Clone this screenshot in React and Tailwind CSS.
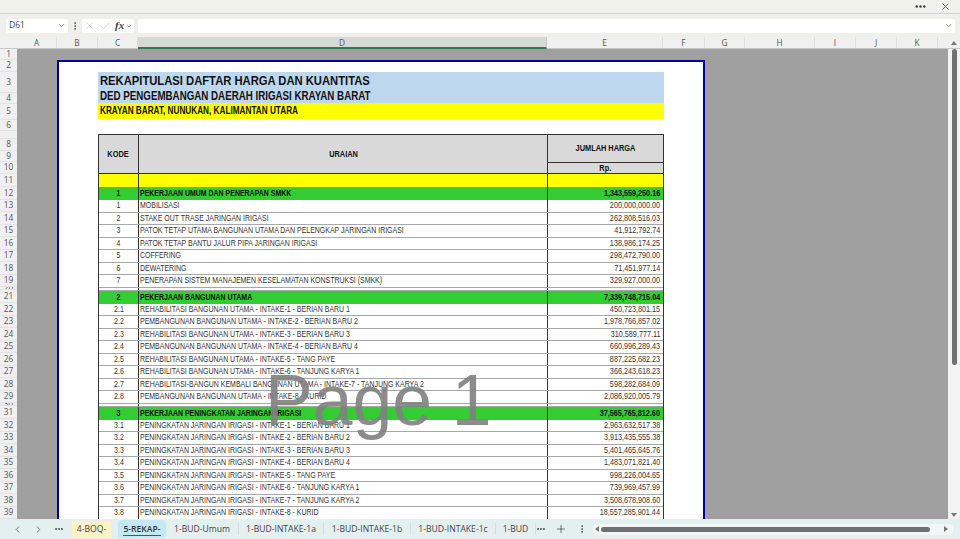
import { ChevronDown, ChevronLeft, ChevronRight, Check, X, Plus, Ellipsis, EllipsisVertical } from "lucide-react";

const columns = [
  { name: "A", width: "w-[40px]" },
  { name: "B", width: "w-[41px]" },
  { name: "C", width: "w-[40px]" },
  { name: "D", width: "w-[409px]", active: true },
  { name: "E", width: "w-[116px]" },
  { name: "F", width: "w-[42px]" },
  { name: "G", width: "w-[40px]" },
  { name: "H", width: "w-[70px]" },
  { name: "I", width: "w-[41px]" },
  { name: "J", width: "w-[41px]" },
  { name: "K", width: "w-[41px]" },
];

const rowHeaders = [
  ["1", "h-[11px]"], ["2", "h-[12px]"], ["3", "h-[21px]"], ["4", "h-[11px]"], ["5", "h-[16px]"],
  ["6", "h-[11px]"], ["", "h-[8px]"], ["8", "h-[11.5px]"], ["9", "h-[11.5px]"], ["10", "h-[12px]"],
  ["11", "h-[13px]"], ["12", "h-[12.5px]"], ["13", "h-[12.5px]"], ["14", "h-[12.5px]"], ["15", "h-[12.5px]"],
  ["16", "h-[12.5px]"], ["17", "h-[12.5px]"], ["18", "h-[12.5px]"], ["19", "h-[12.5px]"], ["20", "h-[3px]"],
  ["21", "h-[13px]"], ["22", "h-[12.5px]"], ["23", "h-[12.5px]"], ["24", "h-[12.5px]"], ["25", "h-[12.5px]"],
  ["26", "h-[12.5px]"], ["27", "h-[12.5px]"], ["28", "h-[12.5px]"], ["29", "h-[12.5px]"], ["30", "h-[3px]"],
  ["31", "h-[13px]"], ["32", "h-[12.5px]"], ["33", "h-[12.5px]"], ["34", "h-[12.5px]"], ["35", "h-[12.5px]"],
  ["36", "h-[12.5px]"], ["37", "h-[12.5px]"], ["38", "h-[12.5px]"], ["39", "h-[12.5px]"],
];

const sections = [
  {
    no: "1",
    title: "PEKERJAAN UMUM DAN PENERAPAN SMKK",
    total: "1,343,559,250.16",
    items: [
      ["1", "MOBILISASI", "200,000,000.00"],
      ["2", "STAKE OUT TRASE JARINGAN IRIGASI", "262,808,516.03"],
      ["3", "PATOK TETAP UTAMA BANGUNAN UTAMA DAN PELENGKAP JARINGAN IRIGASI", "41,912,792.74"],
      ["4", "PATOK TETAP BANTU JALUR PIPA JARINGAN IRIGASI", "138,986,174.25"],
      ["5", "COFFERING", "298,472,790.00"],
      ["6", "DEWATERING", "71,451,977.14"],
      ["7", "PENERAPAN SISTEM MANAJEMEN KESELAMATAN KONSTRUKSI (SMKK)", "329,927,000.00"],
    ],
  },
  {
    no: "2",
    title: "PEKERJAAN BANGUNAN UTAMA",
    total: "7,339,748,715.04",
    items: [
      ["2.1", "REHABILITASI BANGUNAN UTAMA - INTAKE-1 - BERIAN BARU 1", "450,723,801.15"],
      ["2.2", "PEMBANGUNAN BANGUNAN UTAMA - INTAKE-2 - BERIAN BARU 2", "1,978,766,857.02"],
      ["2.3", "REHABILITASI BANGUNAN UTAMA - INTAKE-3 - BERIAN BARU 3", "310,589,777.11"],
      ["2.4", "PEMBANGUNAN BANGUNAN UTAMA - INTAKE-4 - BERIAN BARU 4", "660,996,289.43"],
      ["2.5", "REHABILITASI BANGUNAN UTAMA - INTAKE-5 - TANG PAYE", "887,225,682.23"],
      ["2.6", "REHABILITASI BANGUNAN UTAMA - INTAKE-6 - TANJUNG KARYA 1", "366,243,618.23"],
      ["2.7", "REHABILITASI-BANGUN KEMBALI BANGUNAN UTAMA - INTAKE-7 - TANJUNG KARYA 2", "598,282,684.09"],
      ["2.8", "PEMBANGUNAN BANGUNAN UTAMA - INTAKE-8 - KURID", "2,086,920,005.79"],
    ],
  },
  {
    no: "3",
    title: "PEKERJAAN PENINGKATAN JARINGAN IRIGASI",
    total: "37,565,765,812.60",
    items: [
      ["3.1", "PENINGKATAN JARINGAN IRIGASI - INTAKE-1 - BERIAN BARU 1", "2,963,632,517.38"],
      ["3.2", "PENINGKATAN JARINGAN IRIGASI - INTAKE-2 - BERIAN BARU 2", "3,913,435,555.38"],
      ["3.3", "PENINGKATAN JARINGAN IRIGASI - INTAKE-3 - BERIAN BARU 3", "5,401,465,645.76"],
      ["3.4", "PENINGKATAN JARINGAN IRIGASI - INTAKE-4 - BERIAN BARU 4", "1,483,071,821.40"],
      ["3.5", "PENINGKATAN JARINGAN IRIGASI - INTAKE-5 - TANG PAYE", "998,226,004.65"],
      ["3.6", "PENINGKATAN JARINGAN IRIGASI - INTAKE-6 - TANJUNG KARYA 1", "739,969,457.99"],
      ["3.7", "PENINGKATAN JARINGAN IRIGASI - INTAKE-7 - TANJUNG KARYA 2", "3,508,678,908.60"],
      ["3.8", "PENINGKATAN JARINGAN IRIGASI - INTAKE-8 - KURID", "18,557,285,901.44"],
    ],
  },
];

const plainTabs = [
  { name: "1-BUD-Umum", width: "w-[73px]" },
  { name: "1-BUD-INTAKE-1a", width: "w-[85px]" },
  { name: "1-BUD-INTAKE-1b", width: "w-[87px]" },
  { name: "1-BUD-INTAKE-1c", width: "w-[85px]" },
  { name: "1-BUD", width: "w-[40px]" },
];

// Arial Narrow look: regular Liberation Sans squeezed horizontally
const narrowLeft = "inline-block origin-left scale-x-[0.82] whitespace-nowrap";
const narrowRight = "inline-block origin-right scale-x-[0.85] whitespace-nowrap";
const narrowCenter = "inline-block origin-center scale-x-[0.82] whitespace-nowrap";

const TableRow = ({ no, name, value, className }) => (
  <div className={`flex ${className}`}>
    <div className="w-[40px] shrink-0 border-r border-[#333] text-center">
      <span className={narrowCenter}>{no}</span>
    </div>
    <div className="w-[409px] shrink-0 border-r border-[#333] pl-[1px]">
      <span className={narrowLeft}>{name}</span>
    </div>
    <div className="flex-1 pr-[3px] text-right">
      <span className={narrowRight}>{value}</span>
    </div>
  </div>
);

const Spacer = () => (
  <div className="flex h-[3px] border-b border-[#a8a8a8] bg-white">
    <div className="w-[40px] shrink-0 border-r border-[#333]" />
    <div className="w-[409px] shrink-0 border-r border-[#333]" />
  </div>
);

export default function App() {
  return (
    <div className="flex h-[539px] w-[960px] flex-col overflow-hidden bg-[#e4eff0] font-['Liberation_Sans',Arial,sans-serif]">
      {/* Title bar */}
      <div className="flex h-[14px] shrink-0 items-center justify-end gap-[13px] border-b border-[#d2d2cf] bg-[#f0f0ec] pr-[9px] text-[#333]">
        <Ellipsis size={13} strokeWidth={2.5} />
        <X size={11} strokeWidth={1.5} />
      </div>

      {/* Formula bar */}
      <div className="flex h-[23px] shrink-0 items-center bg-[#eff0ee] pl-[6px] pr-[5px] font-['Open_Sans',sans-serif]">
        <div className="flex h-[14px] w-[62px] items-center justify-between rounded-[2px] bg-white pl-[3px] pr-[2px] text-[8.5px] text-[#444]">
          D61
          <ChevronDown size={9} />
        </div>
        <EllipsisVertical size={10} className="ml-[2px] text-[#444]" />
        <div className="ml-[2px] flex h-[14px] w-[52px] items-center rounded-[2px] bg-white pl-[2px] text-[#bbb]">
          <X size={11} strokeWidth={1.2} />
          <Check size={12} strokeWidth={1.2} className="ml-[4px]" />
          <span className="ml-[4px] font-['Liberation_Serif',serif] text-[11px] font-bold italic leading-none text-[#444]">fx</span>
          <ChevronDown size={8} className="ml-[1px] text-[#777]" />
        </div>
        <div className="ml-[4px] flex h-[14px] flex-1 items-center justify-end rounded-[2px] bg-white pr-[2px] text-[#666]">
          <ChevronDown size={9} />
        </div>
      </div>

      {/* Column headers */}
      <div className="flex h-[12px] shrink-0 border-b border-[#c8c8c8] bg-[#f0f0f0] font-['Open_Sans',sans-serif] text-[8.3px] leading-[11px] text-[#555]">
        <div className="w-[17px] shrink-0" />
        {columns.map((col) => (
          <div
            key={col.name}
            className={`${col.width} shrink-0 border-r text-center ${
              col.active ? "-mb-px border-[#c8c8c8] border-b-2 border-b-[#2f7a4f] bg-[#d8d8d8]" : "border-[#dedede]"
            }`}
          >
            {col.name}
          </div>
        ))}
        <div className="ml-auto mr-[3px] mt-[4px] h-0 w-0 border-x-[3px] border-b-[4px] border-x-transparent border-b-[#777]" />
      </div>

      {/* Sheet */}
      <div className="flex h-[470px] shrink-0 overflow-hidden">
        <div className="w-[17px] shrink-0 bg-[#f0f0f0] font-['Open_Sans',sans-serif] text-[8.3px] text-[#555]">
          {rowHeaders.map(([label, height], i) => (
            <div key={i} className={`${height} flex items-center justify-center overflow-hidden border-b border-[#e2e2e2]`}>
              {label}
            </div>
          ))}
        </div>

        <div className="relative flex-1 overflow-hidden bg-[#a0a0a0] pl-[40px] pt-[11px]">
          <div className="h-[470px] w-[648px] border-x-2 border-t-2 border-[#000099] bg-white pl-[39px] pt-[10px]">
            <div className="w-[566px]">
              <div className="h-[31px] bg-[#bdd7ee] pl-[2px] font-bold text-[#111]">
                <div className="h-[18px] text-[13.7px] leading-[18px]">
                  <span className={narrowLeft}>REKAPITULASI DAFTAR HARGA DAN KUANTITAS</span>
                </div>
                <div className="h-[13px] text-[11.9px] leading-[13px]">
                  <span className={narrowLeft}>DED PENGEMBANGAN DAERAH IRIGASI KRAYAN BARAT</span>
                </div>
              </div>
              <div className="h-[16px] bg-[#ffff00] pl-[2px] text-[10px] font-bold leading-[16px] text-[#111]">
                <span className={narrowLeft}>KRAYAN BARAT, NUNUKAN, KALIMANTAN UTARA</span>
              </div>

              <div className="mt-[15px] border-x border-[#333]">
                <div className="flex h-[40px] border-y border-[#333] bg-[#d9d9d9] text-[9px] font-bold leading-none text-[#111]">
                  <div className="flex w-[40px] shrink-0 items-center justify-center border-r border-[#333]">
                    <span className={narrowCenter}>KODE</span>
                  </div>
                  <div className="flex w-[409px] shrink-0 items-center justify-center border-r border-[#333]">
                    <span className={narrowCenter}>URAIAN</span>
                  </div>
                  <div className="flex flex-1 flex-col">
                    <div className="flex h-[28px] shrink-0 items-center justify-center border-b border-[#333]">
                      <span className={narrowCenter}>JUMLAH HARGA</span>
                    </div>
                    <div className="flex flex-1 items-center justify-center">
                      <span className={narrowCenter}>Rp.</span>
                    </div>
                  </div>
                </div>
                <div className="flex h-[13px] bg-[#ffff00]">
                  <div className="w-[40px] shrink-0 border-r border-[#333]" />
                  <div className="w-[409px] shrink-0 border-r border-[#333]" />
                </div>
                {sections.map((section, i) => (
                  <div key={section.no}>
                    {i > 0 && <Spacer />}
                    <TableRow
                      no={section.no}
                      name={section.title}
                      value={section.total}
                      className="h-[13px] bg-[#33cc33] text-[8.5px] font-bold leading-[12.5px] text-[#111]"
                    />
                    {section.items.map(([no, name, value]) => (
                      <TableRow
                        key={no}
                        no={no}
                        name={name}
                        value={value}
                        className="h-[12.5px] border-b border-[#a8a8a8] bg-white text-[8.5px] leading-[11.5px] text-[#333]"
                      />
                    ))}
                  </div>
                ))}
              </div>
            </div>
          </div>

          {/* Page watermark */}
          <div className="absolute left-[248px] top-[301px] whitespace-nowrap text-[71.5px] leading-[100px] text-[#808080]/90">
            Page 1
          </div>
        </div>

        {/* Vertical scrollbar */}
        <div className="relative w-[12px] shrink-0 bg-[#f3f3f3]">
          <div className="ml-[4px] h-[316px] w-[5px] rounded-[3px] bg-[#707070]" />
          <div className="absolute bottom-[2px] left-[3px] h-0 w-0 border-x-[3px] border-t-[4px] border-x-transparent border-t-[#777]" />
        </div>
      </div>

      {/* Sheet tabs */}
      <div className="flex h-[20px] shrink-0 items-center font-['Open_Sans',sans-serif] text-[8.6px] text-[#444]">
        <ChevronLeft size={11} className="ml-[12px]" strokeWidth={1.5} />
        <ChevronRight size={11} className="ml-[10px]" strokeWidth={1.5} />
        <Ellipsis size={10} className="ml-[10px]" strokeWidth={2.5} />
        <div className="ml-[8px] flex h-[17px] w-[39px] items-center justify-center rounded-[3px] bg-[#fdf2c6]">4-BOQ-</div>
        <div className="ml-[7px] flex h-[18px] w-[48px] flex-col items-center justify-center rounded-[3px] bg-[#c5e9f4] font-semibold text-[#333]">
          <span className="border-b border-[#1f6f50] leading-[12px]">5-REKAP-</span>
        </div>
        {plainTabs.map((tab) => (
          <div key={tab.name} className={`${tab.width} shrink-0 border-r border-[#d3dedf] text-center last:border-r-0`}>
            {tab.name}
          </div>
        ))}
        <Ellipsis size={10} strokeWidth={2.5} />
        <Plus size={12} className="ml-[9px]" strokeWidth={1.5} />
        <EllipsisVertical size={10} className="ml-[10px]" />
        <div className="ml-[6px] flex h-[11px] w-[360px] items-center rounded-[4px] bg-[#f4f6f6]">
          <div className="ml-[2px] h-0 w-0 border-y-[3px] border-r-[4px] border-y-transparent border-r-[#777]" />
          <div className="ml-[2px] h-[5px] w-[329px] rounded-[3px] bg-[#707070]" />
          <div className="ml-[14px] h-0 w-0 border-y-[3px] border-l-[4px] border-y-transparent border-l-[#777]" />
        </div>
      </div>
    </div>
  );
}
